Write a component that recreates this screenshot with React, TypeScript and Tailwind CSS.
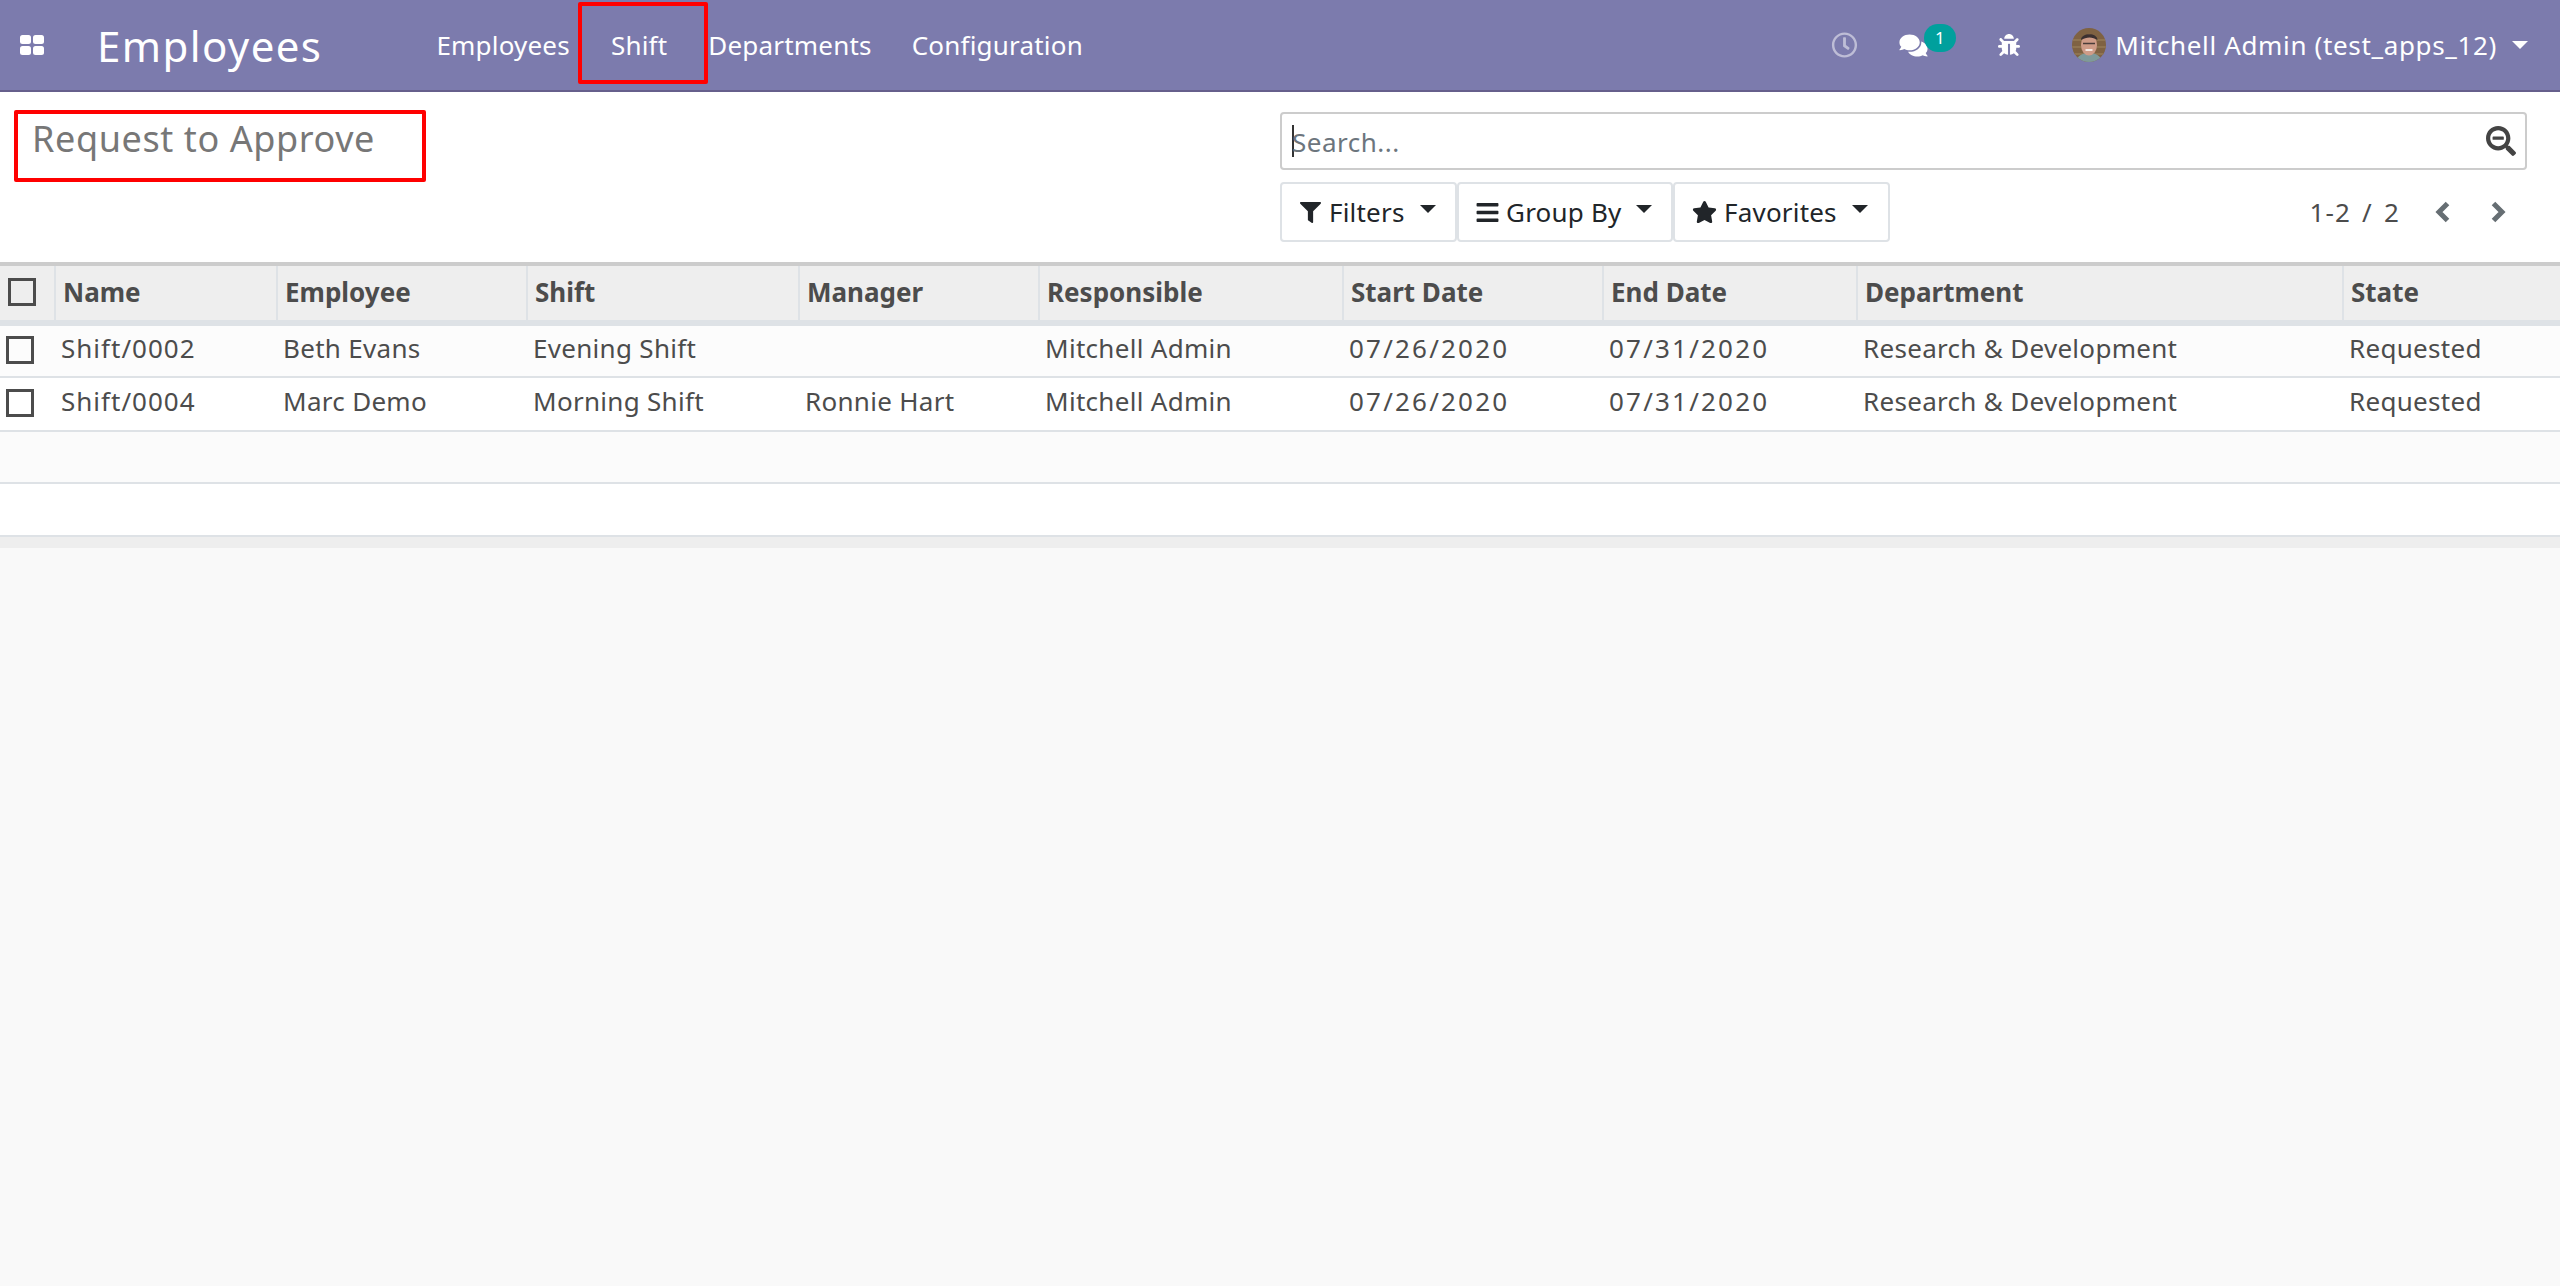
import { FaBug, FaBars, FaComments, FaFilter, FaRegClock, FaSearchMinus, FaStar } from "react-icons/fa";

const rows = [
  { name: "Shift/0002", employee: "Beth Evans", shift: "Evening Shift", manager: "" },
  { name: "Shift/0004", employee: "Marc Demo", shift: "Morning Shift", manager: "Ronnie Hart" },
];

function Caret({ className }: { className: string }) {
  return <span className={"inline-block border-x-[8px] border-t-[8px] border-x-transparent " + className} />;
}

function AppsIcon() {
  return (
    <svg width="24" height="20" viewBox="0 0 24 20" fill="currentColor" className="ml-[20px] shrink-0">
      <rect x="0" y="0" width="11" height="9" rx="2.5" />
      <rect x="13" y="0" width="11" height="9" rx="2.5" />
      <rect x="0" y="11" width="11" height="9" rx="2.5" />
      <rect x="13" y="11" width="11" height="9" rx="2.5" />
    </svg>
  );
}

function Avatar() {
  return (
    <svg width="34" height="34" viewBox="0 0 34 34" className="shrink-0">
      <clipPath id="av"><circle cx="17" cy="17" r="17" /></clipPath>
      <g clipPath="url(#av)">
        <rect width="34" height="34" fill="#7f6242" />
        <path d="M0 12h34M0 19h34M0 26h34" stroke="#8f7450" strokeWidth="2" />
        <path d="M4 34c1-6 6-9 13-9s12 3 13 9z" fill="#7f9a9a" />
        <ellipse cx="17" cy="17" rx="8" ry="10.5" fill="#cf9c88" />
        <path d="M9 12C9 5 25 4 25.5 12c-5-3.500-11-3.500-16.500 0z" fill="#3b3030" />
        <path d="M11 15.500h12" stroke="#4a3d3a" strokeWidth="1.500" />
        <path d="M13.500 22h7" stroke="#f3e6e0" strokeWidth="2" />
      </g>
    </svg>
  );
}

function NavBar() {
  return (
    <header className="flex h-[92px] items-center border-b-2 border-[#665f8c] bg-[#7c7bad] text-white">
      <AppsIcon />
      <span className="ml-[53px] pt-[2px] text-[42px] leading-none tracking-[1.4px]">Employees</span>
      <nav className="ml-[114px] flex items-center text-[26px] tracking-[0.2px]">
        <span>Employees</span>
        <span className="relative ml-[41px]">
          Shift
          <span className="absolute -left-[33px] -top-[24px] h-[82px] w-[130px] rounded-[2px] border-4 border-[#ff0000]" />
        </span>
        <span className="ml-[41px]">Departments</span>
        <span className="ml-[40px]">Configuration</span>
      </nav>
      <div className="ml-auto flex items-center text-[26px] tracking-[0.65px]">
        <FaRegClock className="h-[26px] w-[27px] opacity-50" />
        <span className="relative ml-[39px] flex">
          <FaComments className="h-[25px] w-[33px]" />
          <span className="absolute -top-[9px] left-[27px] flex h-[28px] w-[32px] items-center justify-center rounded-full bg-[#00a09d] text-[17px]">1</span>
        </span>
        <FaBug className="ml-[68px] h-[22px] w-[22px]" />
        <span className="ml-[52px]"><Avatar /></span>
        <span className="ml-[9px]">Mitchell Admin (test_apps_12)</span>
        <Caret className="ml-[15px] mr-[32px] border-t-white" />
      </div>
    </header>
  );
}

function Chevron({ left }: { left?: boolean }) {
  return (
    <svg width="15" height="22" viewBox="0 0 15 22" fill="none" stroke="#666e73" strokeWidth="5" className="shrink-0">
      <path d={left ? "M12.5 2.500 4 11l8.500 8.500" : "M2.500 2.500 11 11l-8.500 8.500"} />
    </svg>
  );
}

function ControlPanel() {
  return (
    <div className="flex h-[170px] justify-between bg-white">
      <div className="relative ml-[14px] mt-[18px] h-[72px] w-[412px] rounded-[2px] border-4 border-[#ff0000]">
        <h1 className="ml-[14px] text-[36px] leading-[50px] tracking-[0.6px] text-[#777777]">Request to Approve</h1>
      </div>
      <div className="mr-[33px] mt-[20px] w-[1247px]">
        <div className="flex h-[58px] items-center rounded-[4px] border-2 border-[#cccccc] pl-[10px] pr-[9px]">
          <span className="h-[32px] w-[2px] bg-[#333333]" />
          <span className="-ml-[2px] pt-[2px] text-[26px] tracking-[0.5px] text-[#6c757d]">Search...</span>
          <FaSearchMinus className="ml-auto h-[30px] w-[30px] text-[#444444]" />
        </div>
        <div className="mt-[12px] flex items-center text-[26px] tracking-[0.2px] text-[#212529]">
          <button className="flex h-[60px] w-[177px] items-center rounded-[4px] border-2 border-[#dee2e6] pl-[18px]">
            <FaFilter className="mr-[8px] h-[21px] w-[21px]" />Filters<Caret className="ml-[15px] -translate-y-[3px] border-t-[#212529]" />
          </button>
          <button className="flex h-[60px] w-[216px] items-center rounded-[4px] border-2 border-[#dee2e6] pl-[17px]">
            <FaBars className="mr-[7px] h-[25px] w-[23px]" />Group By<Caret className="ml-[15px] -translate-y-[3px] border-t-[#212529]" />
          </button>
          <button className="flex h-[60px] w-[217px] items-center rounded-[4px] border-2 border-[#dee2e6] pl-[17px]">
            <FaStar className="mr-[7px] h-[24px] w-[25px]" />Favorites<Caret className="ml-[15px] -translate-y-[3px] border-t-[#212529]" />
          </button>
          <span className="ml-auto tracking-[1.2px] text-[#4c4c4c] [word-spacing:3px]">1-2 / 2</span>
          <span className="ml-[35px]"><Chevron left /></span>
          <span className="ml-[41px] mr-[21px]"><Chevron /></span>
        </div>
      </div>
    </div>
  );
}

function Check() {
  return <span className="block h-[28px] w-[28px] border-[3px] border-[#4c4c4c]" />;
}

const th = "border-l-2 border-[#dee2e6] px-[7px] pb-[2px] text-left font-bold";
const td = "px-[6px] pb-[5px] tracking-[0.3px]";

export default function App() {
  return (
    <div className="min-h-[1286px] bg-[#f9f9f9] font-['Noto_Sans',sans-serif] text-[#4c4c4c]">
      <NavBar />
      <ControlPanel />
      <table className="w-full table-fixed border-collapse bg-white text-[26px]">
        <thead>
          <tr className="h-[59px] border-t-4 border-b-[6px] border-t-[#cccccc] border-b-[#dee2e6] bg-[#eeeeee]">
            <th className="w-[55px] pb-[2px] pl-[8px]"><Check /></th>
            <th className={th + " w-[222px]"}>Name</th>
            <th className={th + " w-[250px]"}>Employee</th>
            <th className={th + " w-[272px]"}>Shift</th>
            <th className={th + " w-[240px]"}>Manager</th>
            <th className={th + " w-[304px]"}>Responsible</th>
            <th className={th + " w-[260px]"}>Start Date</th>
            <th className={th + " w-[254px]"}>End Date</th>
            <th className={th + " w-[486px]"}>Department</th>
            <th className={th}>State</th>
          </tr>
        </thead>
        <tbody>
          {rows.map((r, i) => (
            <tr key={r.name} className={"h-[54px] border-b-2 border-[#dee2e6] " + (i === 0 ? "bg-[#fcfcfc]" : "bg-white")}>
              <td className="pb-[2px] pl-[6px]"><Check /></td>
              <td className={td + " tracking-[1px]"}>{r.name}</td>
              <td className={td}>{r.employee}</td>
              <td className={td}>{r.shift}</td>
              <td className={td}>{r.manager}</td>
              <td className={td}>Mitchell Admin</td>
              <td className={td + " tracking-[2.2px]"}>07/26/2020</td>
              <td className={td + " tracking-[2.2px]"}>07/31/2020</td>
              <td className={td}>Research &amp; Development</td>
              <td className={td}>Requested</td>
            </tr>
          ))}
          <tr className="h-[52px] border-b-2 border-[#dee2e6] bg-[#fbfbfb]"><td colSpan={10} /></tr>
          <tr className="h-[53px] border-b-2 border-[#dee2e6] bg-white"><td colSpan={10} /></tr>
        </tbody>
      </table>
      <div className="h-[11px] bg-[#eeeeee]" />
    </div>
  );
}
